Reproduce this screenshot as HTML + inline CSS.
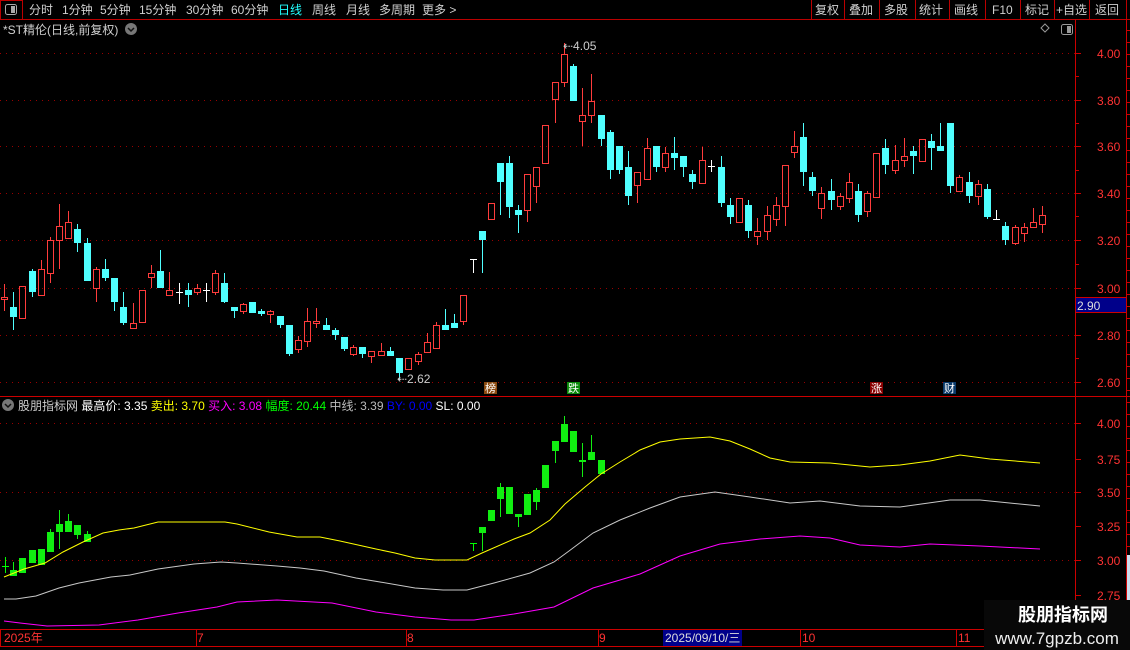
<!DOCTYPE html>
<html><head><meta charset="utf-8"><style>
html,body{margin:0;padding:0;background:#000;width:1130px;height:650px;overflow:hidden}
svg{display:block}
text{font-family:"Liberation Sans","Noto Sans CJK SC",sans-serif;font-size:12px}
</style></head><body>
<svg id="s" width="1130" height="650" xmlns="http://www.w3.org/2000/svg">
<rect width="1130" height="650" fill="#000"/>
<line x1="0" y1="19.5" x2="1130" y2="19.5" stroke="#b00" />
<rect x="0.5" y="0.5" width="22" height="19" fill="none" stroke="#b00"/>
<rect x="5.5" y="4.5" width="11" height="10" rx="2" fill="none" stroke="#aaa"/>
<rect x="11" y="6" width="4" height="7" fill="#aaa"/>
<g fill="#d0d0d0">
<text x="29" y="14">分时</text><text x="62" y="14">1分钟</text><text x="100" y="14">5分钟</text>
<text x="139" y="14">15分钟</text><text x="186" y="14">30分钟</text><text x="231" y="14">60分钟</text>
<text x="278" y="14" fill="#2ff">日线</text><text x="312" y="14">周线</text><text x="346" y="14">月线</text>
<text x="379" y="14">多周期</text><text x="422" y="14">更多 &gt;</text>
</g>
<g stroke="#b00"><line x1="811.5" y1="0" x2="811.5" y2="19"/><line x1="844.5" y1="0" x2="844.5" y2="19"/><line x1="879.5" y1="0" x2="879.5" y2="19"/><line x1="915.5" y1="0" x2="915.5" y2="19"/><line x1="949.5" y1="0" x2="949.5" y2="19"/><line x1="985.5" y1="0" x2="985.5" y2="19"/><line x1="1020.5" y1="0" x2="1020.5" y2="19"/><line x1="1054.5" y1="0" x2="1054.5" y2="19"/><line x1="1089.5" y1="0" x2="1089.5" y2="19"/><line x1="1126.5" y1="0" x2="1126.5" y2="19"/></g>
<g fill="#d0d0d0"><text x="815" y="14">复权</text><text x="849" y="14">叠加</text><text x="884" y="14">多股</text><text x="919" y="14">统计</text><text x="954" y="14">画线</text><text x="992" y="14">F10</text><text x="1025" y="14">标记</text><text x="1056" y="14">+自选</text><text x="1095" y="14">返回</text></g>
<text x="3" y="34" fill="#d0d0d0">*ST精伦(日线,前复权)</text>
<circle cx="131" cy="29" r="6" fill="#777"/><path d="M128 28l3 3 3-3" stroke="#111" stroke-width="1.5" fill="none"/>
<path d="M1045 24l4 4-4 4-4-4z" fill="none" stroke="#999"/>
<rect x="1061.5" y="24.5" width="11" height="10" rx="2" fill="none" stroke="#999"/><rect x="1067" y="26" width="4" height="7" fill="#999"/>
<line x1="1075.5" y1="19" x2="1075.5" y2="645" stroke="#c00"/>
<line x1="1126.5" y1="19" x2="1126.5" y2="600" stroke="#c00"/>
<line x1="0" y1="396.5" x2="1130" y2="396.5" stroke="#c00"/>
<line x1="0" y1="629.5" x2="1075" y2="629.5" stroke="#c00"/>
<line x1="0" y1="646.5" x2="1075" y2="646.5" stroke="#c00"/>
<g id="grid" stroke="#900" stroke-dasharray="1,5"></g>
<g id="ax" fill="#ff3333"></g>
<rect x="1075.5" y="297.5" width="51" height="15" fill="#00008a" stroke="#c00"/>
<text x="1077" y="310" fill="#ddd">2.90</text>
<g id="c"></g>
<g id="lines" fill="none" stroke-width="1"></g>
<text x="563" y="50" fill="#ccc">⇠4.05</text>
<text x="397" y="383" fill="#ccc">⇠2.62</text>
<rect x="484" y="382" width="13" height="12" fill="#8b4a10"/><text x="485" y="392" fill="#fff" style="font-size:11px">榜</text>
<rect x="567" y="382" width="13" height="12" fill="#0a8a0a"/><text x="568" y="392" fill="#fff" style="font-size:11px">跌</text>
<rect x="870" y="382" width="13" height="12" fill="#800"/><text x="871" y="392" fill="#fff" style="font-size:11px">涨</text>
<rect x="943" y="382" width="13" height="12" fill="#0a3a6a"/><text x="944" y="392" fill="#fff" style="font-size:11px">财</text>
<circle cx="8" cy="405" r="6" fill="#777"/><path d="M5 404l3 3 3-3" stroke="#111" stroke-width="1.5" fill="none"/>
<text x="18" y="410"><tspan fill="#ccc">股朋指标网</tspan><tspan fill="#fff"> 最高价: 3.35 </tspan><tspan fill="#ff0">卖出: 3.70 </tspan><tspan fill="#f0f">买入: 3.08 </tspan><tspan fill="#0f0">幅度: 20.44 </tspan><tspan fill="#bbb">中线: 3.39 </tspan><tspan fill="#00f">BY: 0.00 </tspan><tspan fill="#fff">SL: 0.00</tspan></text>
<g fill="#ff3333"><text x="4" y="642">2025年</text><text x="197" y="642">7</text><text x="407" y="642">8</text><text x="599" y="642">9</text><text x="802" y="642">10</text><text x="958" y="642">11</text></g>
<g stroke="#c00"><line x1="196.5" y1="630" x2="196.5" y2="646"/><line x1="406.5" y1="630" x2="406.5" y2="646"/><line x1="598.5" y1="630" x2="598.5" y2="646"/><line x1="800.5" y1="630" x2="800.5" y2="646"/><line x1="956.5" y1="630" x2="956.5" y2="646"/><line x1="0.5" y1="630" x2="0.5" y2="646"/></g>
<rect x="663" y="630" width="79" height="16" fill="#00008a"/>
<text x="665" y="642" fill="#ddd">2025/09/10/三</text>
<rect x="984" y="600" width="146" height="50" fill="#080808"/>
<text x="1063" y="621" fill="#fff" text-anchor="middle" style="font-size:18px;font-weight:bold">股朋指标网</text>
<text x="1057" y="644" fill="#eee" text-anchor="middle" style="font-size:17px">www.7gpzb.com</text>
<rect x="1127" y="555" width="3" height="45" fill="#cde"/>
</svg>
<script>
var NS="http://www.w3.org/2000/svg";
function el(p,t,a){var e=document.createElementNS(NS,t);for(var k in a)e.setAttribute(k,a[k]);p.appendChild(e);return e;}
var g=document.getElementById('grid'),ax=document.getElementById('ax');
[[53,"4.00"],[100,"3.80"],[146,"3.60"],[193,"3.40"],[240,"3.20"],[288,"3.00"],[335,"2.80"],[382,"2.60"]].forEach(function(v){
 el(g,'line',{x1:0,y1:v[0]+.5,x2:1075,y2:v[0]+.5});
 el(ax,'line',{x1:1075,y1:v[0]+.5,x2:1081,y2:v[0]+.5,stroke:'#c00'});
 var t=el(ax,'text',{x:1097,y:v[0]+5});t.textContent=v[1];});
[76,123,170,216,264,311,358].forEach(function(y){el(ax,'line',{x1:1075,y1:y+.5,x2:1079,y2:y+.5,stroke:'#c00'});});
[[423,"4.00",1],[459,"3.75",0],[492,"3.50",1],[526,"3.25",0],[560,"3.00",1],[595,"2.75",0]].forEach(function(v){
 if(v[2])el(g,'line',{x1:0,y1:v[0]+.5,x2:1075,y2:v[0]+.5});
 el(ax,'line',{x1:1075,y1:v[0]+.5,x2:1081,y2:v[0]+.5,stroke:'#c00'});
 var t=el(ax,'text',{x:1097,y:v[0]+5});t.textContent=v[1];});
for(var y=30;y<645;y+=12){el(ax,'line',{x1:1126,y1:y+.5,x2:1130,y2:y+.5,stroke:'#c00'});}
var C=document.getElementById('c');
var d=[[4,297,299,284,311,'r'],[13,307,317,292,330,'c'],[22,286,318,286,318,'r'],[32,271,292,269,297,'c'],[41,269,295,260,295,'r'],[50,240,273,237,283,'r'],[59,226,240,204,269,'r'],[68,222,238,211,238,'r'],[77,229,243,224,252,'c'],[87,243,281,238,281,'c'],[96,269,288,267,302,'r'],[105,269,278,259,281,'c'],[114,278,302,278,311,'c'],[123,307,323,292,325,'c'],[133,323,328,303,328,'r'],[142,290,322,290,322,'r'],[151,273,277,265,288,'r'],[160,271,288,250,288,'c'],[169,290,295,272,295,'r'],[179,292,292,283,304,'w'],[188,290,295,283,307,'c'],[197,288,292,284,295,'r'],[206,290,290,283,302,'w'],[215,273,292,270,295,'r'],[224,283,302,273,303,'c'],[234,307,311,307,318,'c'],[243,304,311,303,314,'r'],[252,302,313,302,313,'c'],[261,311,314,309,316,'c'],[270,311,314,310,323,'r'],[280,316,325,316,328,'c'],[289,325,354,325,356,'c'],[298,340,349,336,353,'r'],[307,321,341,308,347,'r'],[316,321,323,308,328,'r'],[326,325,330,318,330,'c'],[335,330,335,328,340,'c'],[344,337,349,337,351,'c'],[353,347,354,345,356,'r'],[362,347,354,347,358,'c'],[371,351,356,351,363,'r'],[381,351,355,343,356,'r'],[390,351,356,347,356,'c'],[399,358,373,358,380,'c'],[408,358,369,358,370,'r'],[418,354,361,352,365,'r'],[427,342,352,333,353,'r'],[436,325,348,322,349,'r'],[445,325,330,309,330,'c'],[454,323,328,314,328,'c'],[463,295,321,295,325,'r'],[473,259,259,259,273,'w'],[482,231,240,231,273,'c'],[491,203,219,203,219,'r'],[500,163,182,163,215,'c'],[509,163,207,156,218,'c'],[518,210,215,205,233,'c'],[527,174,210,174,222,'r'],[536,167,186,167,203,'r'],[545,125,163,125,163,'r'],[555,82,99,82,123,'r'],[564,54,82,43,87,'r'],[573,66,101,64,101,'c'],[582,115,121,88,146,'r'],[591,101,115,74,123,'r'],[601,115,139,115,146,'c'],[610,132,170,130,179,'c'],[619,146,170,146,174,'c'],[628,167,196,151,205,'c'],[637,172,185,172,203,'r'],[647,148,179,138,179,'r'],[656,146,167,146,172,'c'],[665,153,167,147,172,'r'],[674,153,158,137,170,'c'],[683,156,167,156,177,'c'],[692,174,182,170,189,'c'],[702,160,183,147,183,'r'],[711,166,166,160,172,'w'],[721,167,203,156,207,'c'],[730,205,217,198,224,'c'],[739,198,222,198,222,'r'],[748,205,231,200,238,'c'],[757,231,236,218,245,'r'],[767,215,231,206,240,'r'],[776,205,219,197,226,'r'],[785,165,206,165,226,'r'],[794,146,152,131,158,'r'],[803,137,172,123,186,'c'],[812,177,191,172,196,'c'],[821,193,208,187,219,'r'],[831,191,200,179,210,'c'],[840,196,206,193,210,'r'],[849,182,198,173,203,'r'],[858,191,215,184,222,'c'],[867,193,211,191,217,'r'],[876,153,197,153,197,'r'],[885,148,165,139,174,'c'],[895,160,170,145,174,'r'],[904,156,160,138,167,'r'],[913,151,156,146,174,'c'],[922,139,161,139,161,'r'],[931,141,148,134,170,'c'],[940,146,151,123,151,'c'],[950,123,186,123,193,'c'],[959,177,191,175,191,'r'],[969,182,196,172,203,'c'],[978,184,196,180,205,'r'],[987,189,217,184,219,'c'],[996,219,219,210,219,'w'],[1005,226,240,222,245,'c'],[1015,227,243,225,245,'r'],[1024,227,233,223,242,'r'],[1033,222,227,208,228,'r'],[1042,215,224,206,233,'r']];
function cand(v,col,hollow){
 var x=v[0],t=v[1],b=v[2],h=v[3],l=v[4];
 if(v[5]=='w'){el(C,'line',{x1:x+.5,y1:h,x2:x+.5,y2:l,stroke:'#fff'});el(C,'line',{x1:x-3,y1:t+.5,x2:x+4,y2:t+.5,stroke:'#fff'});return;}
 if(t<h)h=t; if(b>l)l=b;
 if(h<t)el(C,'line',{x1:x+.5,y1:h,x2:x+.5,y2:t,stroke:col});
 if(l>b)el(C,'line',{x1:x+.5,y1:b,x2:x+.5,y2:l,stroke:col});
 if(hollow)el(C,'rect',{x:x-2.5,y:t+.5,width:6,height:Math.max(b-t,1),fill:'none',stroke:col});
 else el(C,'rect',{x:x-3,y:t,width:7,height:Math.max(b-t,2),fill:col});
}
d.forEach(function(v){cand(v,v[5]=='r'?'#ff3c3c':'#50ffff',v[5]=='r');});
var gd=[[5,566,566,557,573,'gw'],[13,570,576,562,576],[22,558,573,558,573],[32,550,563,550,563],[41,549,565,549,565],[50,532,552,529,552],[59,524,532,510,549],[68,521,532,514,532],[77,525,535,525,539],[87,534,542,531,542],[473,543,543,543,551,'gt'],[482,527,533,527,551],[491,510,521,510,521],[500,487,499,483,517],[509,487,514,487,514],[518,514,517,514,527],[527,494,515,494,515],[536,490,502,488,510],[545,465,488,465,488],[555,441,451,441,463],[564,424,442,416,442],[573,431,452,431,452],[582,460,462,443,477],[591,452,460,435,460],[601,460,474,460,474]];
gd.forEach(function(v){var x=v[0];
 if(v[5]){el(C,'line',{x1:x+.5,y1:v[3],x2:x+.5,y2:v[4],stroke:'#0f0'});el(C,'line',{x1:x-3,y1:v[1]+.5,x2:x+4,y2:v[1]+.5,stroke:'#0f0'});return;}
 cand([x,v[1],v[2],v[3],v[4],'g'],'#11ee11',false);});
var L=document.getElementById('lines');
function pl(pts,col){el(L,'polyline',{points:pts.map(function(p){return p.join(',')}).join(' '),stroke:col});}
pl([[4,577],[24,569],[45,563],[63,552],[83,542],[103,533],[119,530],[134,528],[158,522],[194,522],[225,522],[237,524],[269,532],[297,537],[320,537],[340,541],[376,549],[395,553],[415,558],[435,560],[467,560],[482,553],[514,539],[530,533],[550,520],[565,504],[585,487],[601,474],[620,462],[640,450],[660,442],[680,439],[710,437],[730,441],[750,449],[770,458],[790,462],[830,463],[870,467],[900,465],[930,461],[960,455],[990,459],[1040,463]],'#ffff00');
pl([[4,599],[16,599],[36,596],[59,588],[79,583],[111,577],[130,575],[158,569],[194,564],[221,562],[237,563],[277,566],[300,568],[324,571],[356,578],[380,582],[415,588],[443,590],[467,590],[494,583],[530,573],[554,562],[569,551],[593,533],[620,520],[650,508],[680,497],[715,492],[750,497],[790,503],[820,501],[860,506],[900,507],[950,500],[980,500],[1040,506]],'#c8c8c8');
pl([[4,621],[20,623],[47,626],[99,625],[138,620],[178,613],[217,607],[237,602],[277,600],[332,603],[376,612],[415,617],[451,620],[474,620],[514,614],[554,607],[593,588],[620,580],[640,574],[680,556],[720,544],[760,539],[800,536],[830,538],[860,545],[900,547],[930,544],[980,546],[1040,549]],'#ff00ff');
</script>
</body></html>
